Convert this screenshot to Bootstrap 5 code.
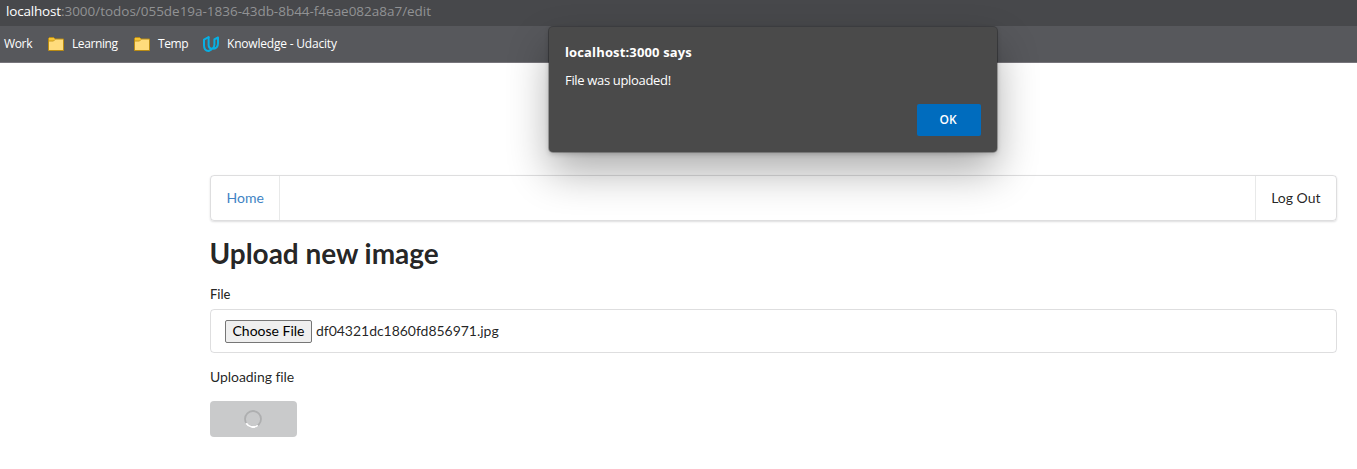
<!DOCTYPE html>
<html lang="en">
<head>
<meta charset="utf-8">
<meta name="viewport" content="width=device-width, initial-scale=1">
<title>Upload new image</title>
<link href="https://cdn.jsdelivr.net/npm/bootstrap@5.3.0/dist/css/bootstrap.min.css" rel="stylesheet">
<style>
body{font-family:Lato,"Liberation Sans",sans-serif;font-size:14px;line-height:20px;color:rgba(0,0,0,.87);background:#fff;height:469px;overflow:hidden}
.chrome-ui{font-family:"Open Sans","Noto Sans",sans-serif;white-space:nowrap}
.url-bar{height:26px;background:#47484b;color:#919294;font-size:13.5px;line-height:22px;padding-left:6px}
.url-bar b{font-weight:400;color:#fff;letter-spacing:-.18px}
.url-bar .url-path{letter-spacing:-.02px}
.bookmarks{height:37px;background:#57585c;border-bottom:1px solid #77757b;color:#fff;font-size:12px;padding-left:4px}
.bookmarks .bm-label{line-height:36px}
.bm-work{width:44px;letter-spacing:-.35px}
.bm-learn{width:62px;margin-left:8px;letter-spacing:-.4px}
.bm-temp{width:45px;margin-left:8px;letter-spacing:-.4px}
.bm-know{margin-left:8px;letter-spacing:-.2px}
.dialog-box{top:27px;left:549px;width:448px;height:125px;background:#4a4a4a;color:#fff;border-radius:4px;padding:16px;font-size:13px;box-shadow:0 0 0 1px rgba(0,0,0,.25),0 2px 5px rgba(0,0,0,.2),0 20px 42px rgba(0,0,0,.32)}
.dialog-title{font-weight:700;line-height:18px;letter-spacing:.14px}
.dialog-text{line-height:18px;margin-top:10px;letter-spacing:-.33px}
.btn-ok{width:64px;height:32px;background:#006cbe;color:#fff;font-size:12px;font-weight:600;border:0;border-radius:2px;padding:0 2px 0 0;margin-top:15px}
.page{margin:112px 20px 0 210px}
.menu-bar{height:46px;border:1px solid rgba(34,36,38,.15);border-radius:4px;box-shadow:0 1px 2px rgba(34,36,38,.15)}
.menu-bar .menu-item{padding:0 15.5px;display:flex;align-items:center;text-decoration:none}
.menu-home{color:#4183c4;border-right:1px solid rgba(34,36,38,.1)}
.menu-out{color:rgba(0,0,0,.87);border-left:1px solid rgba(34,36,38,.1)}
h1{font-size:28px;line-height:36px;font-weight:700;margin:14px 0 0 -.5px;letter-spacing:-.03px}
.field-label{display:block;font-size:13px;line-height:18px;margin:14px 0 6px;font-weight:500}
.file-box{height:44px;border:1px solid rgba(34,36,38,.15);border-radius:4px;padding-left:14px}
.file-name{letter-spacing:-.03px}
.btn-choose{height:23px;width:87px;background:#efefef;border:1px solid #767676;border-radius:2px;padding:0;font-size:14px;line-height:20px;color:#000;white-space:nowrap}
.status-line{margin-top:14px;letter-spacing:-.06px}
.btn-loading{width:87px;height:36px;border-radius:4px;background:#c9cacb;border:0;margin-top:14px;padding:0 8px 0 6px}
</style>
</head>
<body>
<header class="chrome-ui">
  <div class="url-bar"><b>localhost</b><span class="url-path">:3000/todos/055de19a-1836-43db-8b44-f4eae082a8a7/edit</span></div>
  <nav class="bookmarks d-flex align-items-center">
    <span class="bm-label bm-work">Work</span>
    <svg width="16" height="16" viewBox="0 0 16 16"><path d="M.5 14.500v-12l1-1h4l1.500 1.500h8.500v11.500z" fill="#ffdc7c" stroke="#b98b13"/><path d="M1 2h5l1 1.500-1.500 1.500H1z" fill="#f6c332"/><path d="M1 5h4.500L7 3.500" fill="none" stroke="#c79a20"/></svg>
    <span class="bm-label bm-learn">Learning</span>
    <svg width="16" height="16" viewBox="0 0 16 16"><path d="M.5 14.500v-12l1-1h4l1.500 1.500h8.500v11.500z" fill="#ffdc7c" stroke="#b98b13"/><path d="M1 2h5l1 1.500-1.500 1.500H1z" fill="#f6c332"/><path d="M1 5h4.500L7 3.500" fill="none" stroke="#c79a20"/></svg>
    <span class="bm-label bm-temp">Temp</span>
    <svg width="16" height="16" viewBox="0 0 16 16" fill="none" stroke="#08afe3" stroke-width="2" stroke-linejoin="round" stroke-linecap="round"><path d="M5.600 1.200 1 3.600v5.600c0 3.400 1.700 5.600 4.600 5.800l2.600-1.400"/><path d="M5.600 1.200v7.600c0 2.500 1.200 4 3.700 4 3.600 0 5.700-2 5.700-5.600V1.400l-3.600 2v5.400c0 1.700-.7 3-2.100 4"/></svg>
    <span class="bm-label bm-know">Knowledge - Udacity</span>
  </nav>
</header>
<main class="page">
  <nav class="menu-bar d-flex justify-content-between">
    <a class="menu-item menu-home" href="#">Home</a>
    <a class="menu-item menu-out" href="#">Log Out</a>
  </nav>
  <h1>Upload new image</h1>
  <label class="field-label">File</label>
  <div class="file-box d-flex align-items-center">
    <button type="button" class="btn-choose">Choose File</button>
    <span class="ms-1 file-name">df04321dc1860fd856971.jpg</span>
  </div>
  <div class="status-line">Uploading file</div>
  <button type="button" class="btn-loading d-flex align-items-center justify-content-center" aria-label="Loading">
    <svg width="18" height="18" viewBox="0 0 18 18" fill="none" stroke-width="1.800"><circle cx="9" cy="9" r="8" stroke="#aeafb0"/><path d="M2.200 13.200A8 8 0 0 0 13.800 15.400" stroke="#fff"/></svg>
  </button>
</main>
<div class="dialog-box chrome-ui position-absolute" role="dialog">
  <div class="dialog-title">localhost:3000 says</div>
  <div class="dialog-text">File was uploaded!</div>
  <button type="button" class="btn-ok d-block ms-auto">OK</button>
</div>
<script src="https://cdn.jsdelivr.net/npm/bootstrap@5.3.0/dist/js/bootstrap.bundle.min.js"></script>
</body>
</html>
